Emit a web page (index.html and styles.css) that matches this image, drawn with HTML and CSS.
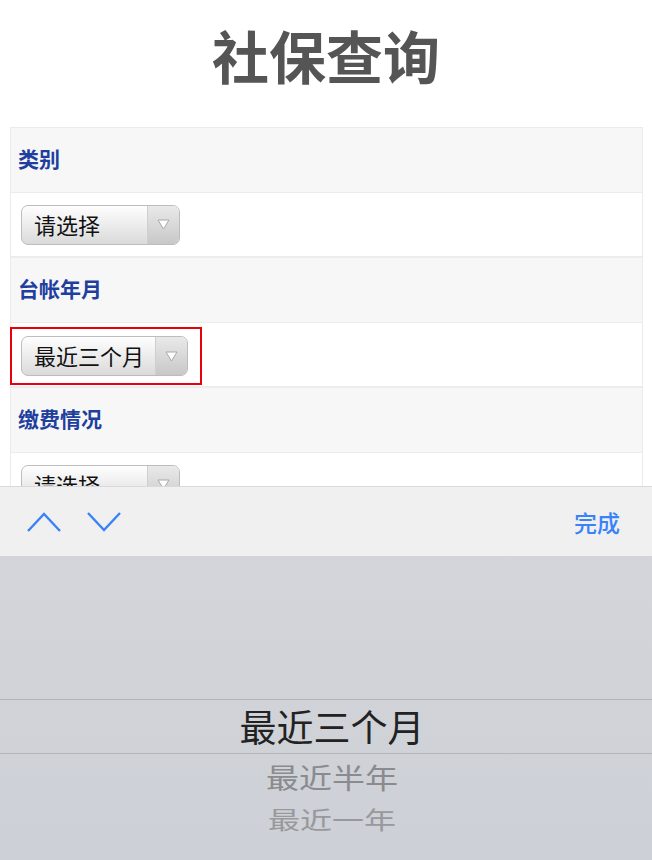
FILE: index.html
```html
<!DOCTYPE html>
<html>
<head>
    <meta charset="utf-8">
    <title>社保查询</title>
    <link rel="stylesheet" href="styles.css">
</head>
<body>
    <div class="page-head">
        <h1>社保查询</h1>
    </div>

    <div class="query-table">
        <!-- 类别 -->
        <div class="row-label">类别</div>
        <div class="row-field">
            <div class="fake-select">
                <span class="fake-select-text">请选择</span>
                <span class="fake-select-arrow">
                    <svg width="13" height="11" viewBox="0 0 13 11"><polygon points="1,1 12,1 6.5,10" fill="#fff" stroke="#a8a8a8" stroke-width="1"/></svg>
                </span>
            </div>
        </div>

        <!-- 台帐年月 -->
        <div class="row-label">台帐年月</div>
        <div class="row-field">
            <div class="focus-box">
                <div class="fake-select">
                    <span class="fake-select-text">最近三个月</span>
                    <span class="fake-select-arrow">
                        <svg width="13" height="11" viewBox="0 0 13 11"><polygon points="1,1 12,1 6.5,10" fill="#fff" stroke="#a8a8a8" stroke-width="1"/></svg>
                    </span>
                </div>
            </div>
        </div>

        <!-- 缴费情况 -->
        <div class="row-label">缴费情况</div>
        <div class="row-field">
            <div class="fake-select">
                <span class="fake-select-text">请选择</span>
                <span class="fake-select-arrow">
                    <svg width="13" height="11" viewBox="0 0 13 11"><polygon points="1,1 12,1 6.5,10" fill="#fff" stroke="#a8a8a8" stroke-width="1"/></svg>
                </span>
            </div>
        </div>
    </div>

    <!-- iOS picker keyboard -->
    <div class="keyboard">
        <div class="toolbar">
            <div class="toolbar-arrows">
                <svg width="34" height="20" viewBox="0 0 34 20"><polyline points="1,19 17,2 33,19" fill="none" stroke="#3a82f7" stroke-width="2.4"/></svg>
                <svg width="34" height="20" viewBox="0 0 34 20"><polyline points="1,1 17,18 33,1" fill="none" stroke="#3a82f7" stroke-width="2.4"/></svg>
            </div>
            <span class="toolbar-done">完成</span>
        </div>
        <div class="picker">
            <div class="picker-current">最近三个月</div>
            <div class="picker-next">最近半年</div>
            <div class="picker-far">最近一年</div>
        </div>
    </div>
</body>
</html>
```

FILE: styles.css
```css
body {
    margin: 0;
    font-family: "Noto Sans CJK SC", "Noto Sans", sans-serif;
    background-color: #fff;
}
.page-head {
    height: 127px;
    padding-top: 21px;
    box-sizing: border-box;
}
h1 {
    margin: 0;
    text-align: center;
    font-size: 57px;
    line-height: 66px;
    font-weight: bold;
    color: #555;
}
.query-table {
    margin: 0 9px 0 10px;
    border: 1px solid #ebebeb;
    border-bottom: none;
}
.row-label {
    height: 64px;
    line-height: 61px;
    padding-left: 7px;
    background-color: #f7f7f7;
    border-bottom: 1px solid #ececec;
    font-size: 21px;
    font-weight: bold;
    color: #1f3f9f;
}
.row-field {
    height: 63px;
    display: flex;
    align-items: center;
    padding-left: 10px;
    background-color: #fff;
    border-bottom: 2px solid #ececec;
}
.focus-box {
    margin-left: -11px;
    padding: 7px 12px 7px 9px;
    border: 2px solid #e8000b;
    margin-top: 3px;
}
.fake-select {
    display: flex;
    height: 40px;
    box-sizing: border-box;
    border: 1px solid #bdbdbd;
    border-radius: 7px;
    overflow: hidden;
    background: linear-gradient(#fefefe, #dadada);
}
.fake-select-text {
    min-width: 125px;
    box-sizing: border-box;
    padding: 0 11px 0 12px;
    font-size: 22px;
    line-height: 37px;
    color: #111;
}
.fake-select-arrow {
    width: 31px;
    display: flex;
    align-items: center;
    justify-content: center;
    border-left: 1px solid #cfcfcf;
    background: linear-gradient(#e9e9e9, #c8c8c8);
}
.keyboard {
    position: fixed;
    left: 0;
    right: 0;
    bottom: 0;
    height: 374px;
}
.toolbar {
    height: 70px;
    box-sizing: border-box;
    border-top: 1px solid #d9d9d9;
    background-color: #f0f0f0;
    display: flex;
    align-items: center;
    justify-content: space-between;
    padding: 0 32px 0 27px;
}
.toolbar-arrows {
    display: flex;
    gap: 26px;
}
.toolbar-done {
    font-size: 23px;
    font-weight: 500;
    color: #3a82f7;
}
.picker {
    height: 304px;
    box-sizing: border-box;
    padding-top: 143px;
    padding-left: 12px;
    background: linear-gradient(#d3d5da, #cdd0d6);
    text-align: center;
}
.picker-current {
    height: 53px;
    line-height: 53px;
    margin-left: -12px;
    padding-left: 12px;
    border-top: 1px solid #b3b5ba;
    border-bottom: 1px solid #b3b5ba;
    font-size: 37px;
    color: #222;
}
.picker-next {
    height: 46px;
    line-height: 46px;
    font-size: 33px;
    color: #8a8b8e;
    transform: scaleY(0.86);
}
.picker-far {
    height: 38px;
    line-height: 38px;
    font-size: 32px;
    color: #98999c;
    transform: scaleY(0.74);
}
```
